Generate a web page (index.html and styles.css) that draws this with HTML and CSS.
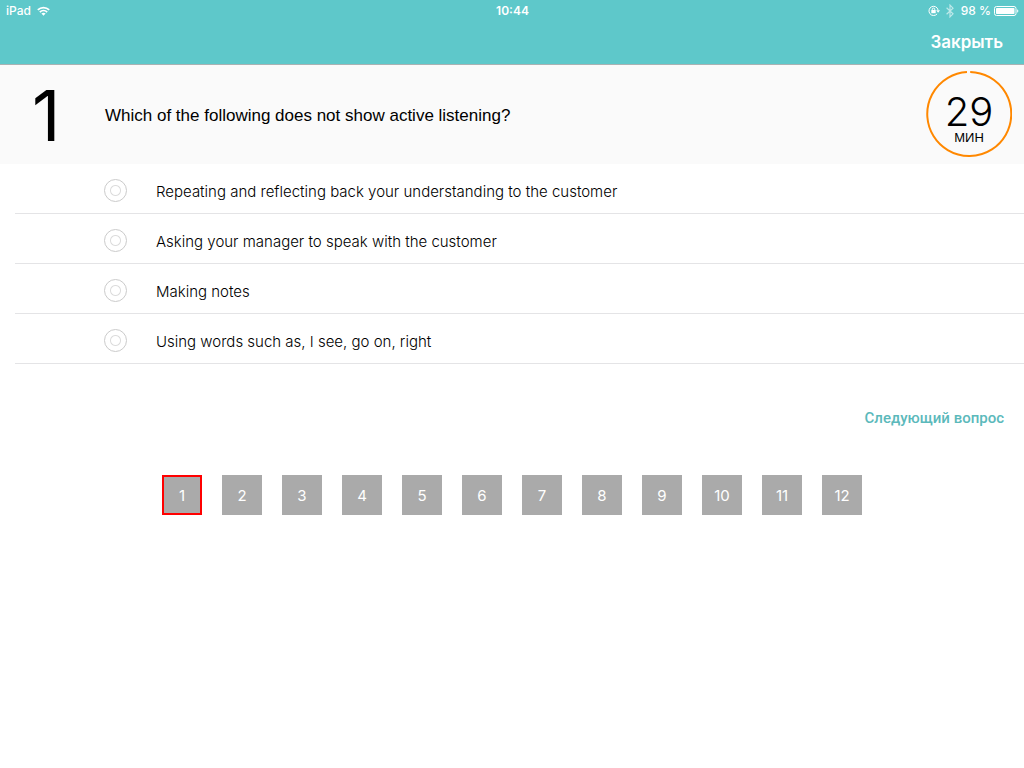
FILE: index.html
```html
<!DOCTYPE html>
<html lang="ru">
<head>
<meta charset="utf-8">
<meta name="viewport" content="width=device-width, initial-scale=1">
<title>Тест</title>
<link rel="stylesheet" href="styles.css">
</head>
<body>
<header class="topbar">
  <div class="status">
    <div class="status-side">
      <span>iPad</span>
      <svg class="wifi" width="13" height="10" viewBox="0 0 13 10" fill="none" stroke="#fff" stroke-width="1.7"><path d="M.8 3.8a8.3 8.3 0 0 1 11.4 0M2.8 6.1a5.4 5.4 0 0 1 7.4 0"/><path d="M4.4 7.6a3.1 3.1 0 0 1 4.2 0L6.5 9.8z" fill="#fff" stroke="none"/></svg>
    </div>
    <time>10:44</time>
    <div class="status-side status-right">
      <svg width="12" height="12" viewBox="0 0 12 12" fill="none" stroke="#fff"><path d="M9.1 8.9A4.6 4.6 0 1 1 10.1 5"/><path d="M8.2 5.2h3.8l-1.9 2.6z" fill="#fff" stroke="none"/><path d="M3.3 5h4.4v3.2H3.3z" fill="#fff" stroke="none"/><path d="M4.3 5.2V4.3a1.2 1.2 0 0 1 2.4 0v.9"/></svg>
      <svg class="bluetooth" width="8" height="14" viewBox="0 0 8 14" fill="none" stroke="#fff" stroke-width="1.2"><path d="M.6 3.8l6.4 6L4 12.9V1.1l3 3.1-6.4 6"/></svg>
      <span>98 %</span>
      <svg width="25" height="10" viewBox="0 0 25 10"><rect x=".5" y=".5" width="21.5" height="9" rx="2" fill="none" stroke="#fff"/><rect x="2" y="2" width="18.5" height="6" rx=".8" fill="#fff"/><path d="M23.2 3.2a2 2 0 0 1 0 3.6z" fill="#fff"/></svg>
    </div>
  </div>
  <nav class="nav"><button class="close" type="button">Закрыть</button></nav>
</header>
<main>
  <section class="question">
    <div class="number">1</div>
    <h1 class="title" id="question">Which of the following does not show active listening?</h1>
    <div class="timer">
      <svg class="ring" viewBox="0 0 86 86" fill="none" stroke="#ff8800" stroke-width="2"><path d="M44.2 1A42 42 0 1 1 41 1.05"/></svg>
      <span class="minutes">29</span>
      <span class="unit">МИН</span>
    </div>
  </section>
  <form class="form">
    <div class="options" role="radiogroup" aria-labelledby="question">
      <label class="option"><input class="radio" type="radio" name="answer"><span class="answer">Repeating and reflecting back your understanding to the customer</span></label>
      <label class="option"><input class="radio" type="radio" name="answer"><span class="answer">Asking your manager to speak with the customer</span></label>
      <label class="option"><input class="radio" type="radio" name="answer"><span class="answer">Making notes</span></label>
      <label class="option"><input class="radio" type="radio" name="answer"><span class="answer">Using words such as, I see, go on, right</span></label>
    </div>
    <div class="actions"><button class="next" type="button">Следующий вопрос</button></div>
  </form>
  <nav class="pages" aria-label="Вопросы">
    <button class="page current" type="button" aria-current="step">1</button>
    <button class="page" type="button">2</button>
    <button class="page" type="button">3</button>
    <button class="page" type="button">4</button>
    <button class="page" type="button">5</button>
    <button class="page" type="button">6</button>
    <button class="page" type="button">7</button>
    <button class="page" type="button">8</button>
    <button class="page" type="button">9</button>
    <button class="page" type="button">10</button>
    <button class="page" type="button">11</button>
    <button class="page" type="button">12</button>
  </nav>
</main>
</body>
</html>
```
FILE: styles.css
```css
* {
  box-sizing: border-box;
}

body {
  margin: 0;
  background: #fff;
  color: #000;
  font-family: "Liberation Sans", Arial, sans-serif;
  font-size: 16px;
}

button {
  padding: 0;
  border: 0;
  background: none;
  cursor: pointer;
}

svg {
  display: block;
}

.topbar {
  background: #5ec8ca;
  border-bottom: 1px solid #a9b2b3;
  color: #fff;
  font-family: Inter, sans-serif;
}

.status {
  display: grid;
  grid-template-columns: 1fr auto 1fr;
  align-items: center;
  height: 20px;
  padding: 1px 5px 0 6px;
  font-size: 12px;
  font-weight: 500;
}

.status time {
  font-weight: 600;
}

.status-side {
  display: flex;
  align-items: center;
  gap: 6px;
}

.status-right {
  justify-content: flex-end;
  gap: 3px;
}

.bluetooth {
  margin: 0 4px 0 3px;
  opacity: 0.6;
}

.nav {
  display: flex;
  align-items: center;
  justify-content: flex-end;
  height: 44px;
  padding: 0 21px;
}

.close {
  color: inherit;
  font: 600 17px/24px Inter, sans-serif;
}

.question {
  display: flex;
  align-items: center;
  min-height: 99px;
  padding: 0 12px 2px 0;
  background: #fafafa;
}

.number {
  flex: none;
  width: 105px;
  padding: 5px 0 0 32px;
  font: 400 70px/80px Inter, sans-serif;
}

.title {
  flex: 1;
  margin: 0;
  padding-top: 4px;
  font-size: 17px;
  font-weight: 400;
  line-height: 20px;
}

.timer {
  position: relative;
  display: flex;
  flex: none;
  flex-direction: column;
  align-items: center;
  width: 86px;
  height: 86px;
  padding-top: 21px;
}

.ring {
  position: absolute;
  inset: 0;
}

.minutes {
  font: 300 40px/40px Inter, sans-serif;
}

.unit {
  font-size: 13px;
  line-height: 12px;
}

.options {
  padding-left: 15px;
}

.option {
  display: flex;
  align-items: center;
  gap: 29px;
  height: 50px;
  padding: 4px 16px 0 89px;
  border-bottom: 1px solid #e4e4e6;
}

.answer {
  padding-top: 3px;
  font: 300 15px/20px Inter, sans-serif;
}

.radio {
  flex: none;
  width: 23px;
  height: 23px;
  margin: 0;
  appearance: none;
  border: 1px solid #cbcbcb;
  border-radius: 50%;
  background: radial-gradient(circle, transparent 4px, #dcdcdc 5px, transparent 6px);
}

.radio:checked {
  background: radial-gradient(circle, #5ec8ca 5px, transparent 6px);
}

.actions {
  display: flex;
  justify-content: flex-end;
  padding: 44px 20px 0;
}

.next {
  color: #5bb9bb;
  font: 500 15px/20px Roboto, sans-serif;
}

.pages {
  display: flex;
  flex-wrap: wrap;
  justify-content: center;
  gap: 20px;
  padding: 47px 20px;
}

.page {
  width: 40px;
  height: 40px;
  padding-top: 2px;
  background: #aaa;
  color: #fff;
  font: 400 15px/20px Inter, sans-serif;
}

.current {
  padding-top: 1px;
  border: 2px solid #f00;
}
```
